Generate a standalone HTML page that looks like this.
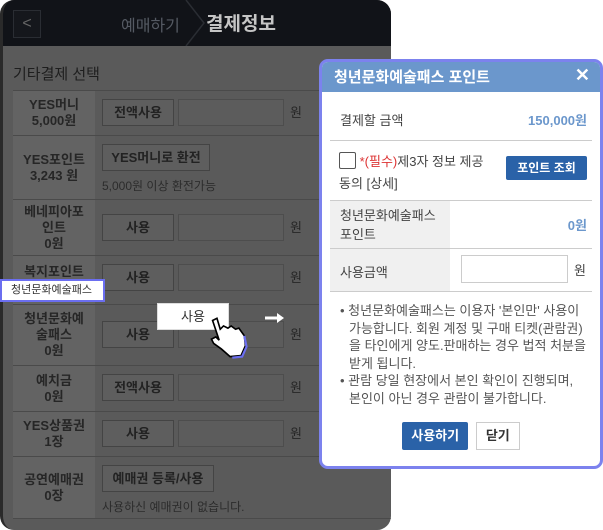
<!DOCTYPE html>
<html><head><meta charset="utf-8"><style>
*{margin:0;padding:0;box-sizing:border-box}
body{width:603px;height:530px;background:#fff;position:relative;overflow:hidden;font-family:"Liberation Sans","Noto Sans CJK KR",sans-serif}
.phone{position:absolute;left:0;top:0;width:391px;height:530px;background:#5a5a5a;border-radius:14px;overflow:hidden;border-left:3px solid #2a2a2a}
.top{position:absolute;left:0;top:0;width:391px;height:46px;background:#111318}
.back{position:absolute;left:10px;top:10px;width:28px;height:28px;border:1px solid #2a2d33;background:#15171c;color:#666;font-size:16px;text-align:center;line-height:26px}
.t1{position:absolute;left:118px;top:12px;color:#555a63;font-size:16px}
.t2{position:absolute;left:203px;top:9px;color:#c5c5c5;font-size:19px;font-weight:bold}
.chev{position:absolute;left:181px;top:0;width:24px;height:46px}
.sec{position:absolute;left:10px;top:63px;color:#1e1e1e;font-size:15px}
.tbl{position:absolute;left:10px;top:90px;width:381px;border-top:1px solid #4a4a4a}
.row{display:flex;border-bottom:1px solid #4a4a4a}
.lab{width:82px;background:#636363;color:#262626;font-size:13px;font-weight:bold;text-align:center;display:flex;flex-direction:column;justify-content:center;line-height:16px}
.cnt{flex:1;padding:8px 0 0 7px;position:relative;font-size:13px;color:#262626}
.btn{display:inline-block;height:27px;border:1px solid #444;background:#5e5e5e;color:#222;font-weight:bold;font-size:13px;line-height:25px;text-align:center;vertical-align:top}
.inp{display:inline-block;width:106px;height:27px;border:1px solid #4d4d4d;background:#5c5c5c;margin-left:4px;vertical-align:top}
.won{display:inline-block;margin-left:6px;line-height:27px;color:#262626}
.note{color:#2c2c2c;font-size:12px;margin-top:6px}
.modal{position:absolute;left:319px;top:59px;width:284px;height:410px;border:3px solid #7c82ee;border-radius:9px;background:#fff;overflow:hidden}
.mh{height:30px;background:#6b97cc;color:#fff;font-weight:bold;font-size:15px;padding:4px 0 0 12px;position:relative}
.mh span{position:absolute;right:10px;top:3px;font-size:18px}
.mb{padding:0 8px 0 8px;font-size:13px;color:#444}
.line{border-bottom:1px solid #ccc}
.bl{color:#6b97cc;font-weight:bold}
</style></head><body>
<div class="phone">
<div class="top"><div class="back">&lt;</div><div class="t1">예매하기</div>
<svg class="chev" viewBox="0 0 24 46"><path d="M2 0 L20 23 L2 46" fill="none" stroke="#2a2d33" stroke-width="1.5"/></svg>
<div class="t2">결제정보</div></div>
<div class="sec">기타결제 선택</div>
<div class="tbl">
<div class="row" style="height:45px"><div class="lab">YES머니<br>5,000원</div><div class="cnt"><span class="btn" style="width:72px">전액사용</span><span class="inp"></span><span class="won">원</span></div></div>
<div class="row" style="height:64px"><div class="lab">YES포인트<br>3,243 원</div><div class="cnt"><span class="btn" style="width:108px">YES머니로 환전</span><div class="note">5,000원 이상 환전가능</div></div></div>
<div class="row" style="height:56px"><div class="lab">베네피아포<br>인트<br>0원</div><div class="cnt" style="padding-top:14px"><span class="btn" style="width:72px">사용</span><span class="inp"></span><span class="won">원</span></div></div>
<div class="row" style="height:49px"><div class="lab">복지포인트<br>0원</div><div class="cnt"><span class="btn" style="width:72px">사용</span><span class="inp"></span><span class="won">원</span></div></div>
<div class="row" style="height:61px"><div class="lab">청년문화예<br>술패스<br>0원</div><div class="cnt" style="padding-top:16px"><span class="btn" style="width:72px">사용</span><span class="inp"></span><span class="won">원</span></div></div>
<div class="row" style="height:46px"><div class="lab">예치금<br>0원</div><div class="cnt"><span class="btn" style="width:72px">전액사용</span><span class="inp"></span><span class="won">원</span></div></div>
<div class="row" style="height:45px"><div class="lab">YES상품권<br>1장</div><div class="cnt"><span class="btn" style="width:72px">사용</span><span class="inp"></span><span class="won">원</span></div></div>
<div class="row" style="height:62px"><div class="lab">공연예매권<br>0장</div><div class="cnt"><span class="btn" style="width:112px">예매권 등록/사용</span><div class="note">사용하신 예매권이 없습니다.</div></div></div>
</div>
</div>
<div style="position:absolute;left:0;top:279px;width:105px;height:23px;background:#fff;border:2px solid #6b6ef0;font-size:11px;color:#333;line-height:19px;padding-left:9px">청년문화예술패스</div>
<div style="position:absolute;left:157px;top:303px;width:72px;height:27px;background:#fff;border:1px solid #ddd;font-size:13px;color:#333;text-align:center;line-height:25px">사용</div>
<svg style="position:absolute;left:206px;top:316px" width="46" height="44" viewBox="0 0 42 40"><path d="M6 4 L10 2 L13 12 L16 9 L20 11 L23 9 L27 12 L30 11 L35 18 L36 27 L32 36 L22 37 L14 30 L7 25 L5 21 L9 19 L12 22 Z" fill="#fff" stroke="#000" stroke-width="1.5"/><path d="M35 18 L37 28 L33 37 L24 38" fill="none" stroke="#6b6ef0" stroke-width="2"/></svg>
<svg style="position:absolute;left:265px;top:313px" width="19" height="10" viewBox="0 0 19 10"><path d="M0 5 H13" stroke="#fff" stroke-width="3"/><path d="M12 0 L19 5 L12 10 Z" fill="#fff"/></svg>
<div class="modal">
<div class="mh">청년문화예술패스 포인트<span>✕</span></div>
<div class="mb">
<div class="line" style="height:49px;display:flex;justify-content:space-between;align-items:center;padding:6px 5px 0 10px"><span>결제할 금액</span><span class="bl">150,000원</span></div>
<div class="line" style="height:60px;position:relative;padding:10px 0 0 9px;line-height:22px">
<span style="display:inline-block;width:17px;height:17px;border:1px solid #555;border-radius:2px;vertical-align:-3px"></span> <span style="color:#d33">*(필수)</span>제3자 정보 제공<br>동의 [상세]
<div style="position:absolute;left:176px;top:15px;width:81px;height:24px;background:#2a62a8;border-radius:2px;color:#fff;font-weight:bold;font-size:12px;text-align:center;line-height:24px">포인트 조회</div></div>
<div class="line" style="height:48px;display:flex"><div style="width:120px;background:#f0f0f0;padding:5px 0 0 10px;line-height:19px">청년문화예술패스<br>포인트</div><div style="flex:1;text-align:right;padding:14px 5px 0 0" class="bl">0원</div></div>
<div class="line" style="height:43px;display:flex"><div style="width:120px;background:#f0f0f0;padding:13px 0 0 10px">사용금액</div><div style="flex:1;padding:6px 0 0 11px"><span style="display:inline-block;width:107px;height:28px;border:1px solid #ccc"></span><span style="margin-left:6px;vertical-align:8px">원</span></div></div>
<div style="padding:10px 0 0 10px;font-size:13px;color:#555;line-height:17.5px">
<div style="padding-left:9px;text-indent:-9px">• 청년문화예술패스는 이용자 '본인만' 사용이 가능합니다. 회원 계정 및 구매 티켓(관람권)을 타인에게 양도.판매하는 경우 법적 처분을 받게 됩니다.</div>
<div style="padding-left:9px;text-indent:-9px">• 관람 당일 현장에서 본인 확인이 진행되며,<br>본인이 아닌 경우 관람이 불가합니다.</div></div>
<div style="text-align:center;margin-top:15px;font-size:13px;font-weight:bold">
<span style="display:inline-block;width:66px;height:28px;background:#2a62a8;color:#fff;line-height:28px;border-radius:2px">사용하기</span>
<span style="display:inline-block;width:44px;height:28px;border:1px solid #ccc;color:#333;line-height:26px;margin-left:4px">닫기</span></div>
</div></div>
</body></html>
